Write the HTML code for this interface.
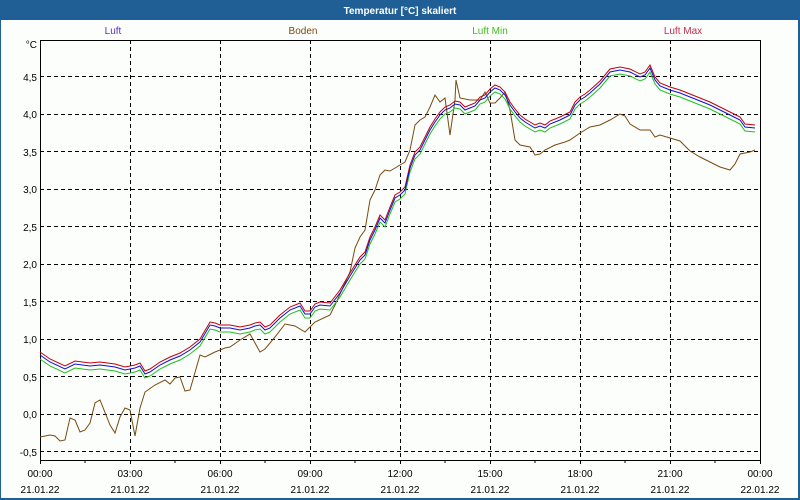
<!DOCTYPE html>
<html><head><meta charset="utf-8"><style>
html,body{margin:0;padding:0;width:800px;height:500px;overflow:hidden;background:#fcfefc}
svg{display:block}
text{font-family:"Liberation Sans",Tahoma,sans-serif;font-size:10px}
</style></head><body>
<svg width="800" height="500" xmlns="http://www.w3.org/2000/svg">
<rect x="0" y="0" width="800" height="500" fill="#1f5f96"/>
<rect x="1" y="20" width="797" height="478" fill="#fcfefc"/>
<text x="400" y="14" fill="#fff" font-weight="bold" font-size="11" text-anchor="middle">Temperatur [°C] skaliert</text>
<text x="113" y="34" fill="#6030c0" text-anchor="middle">Luft</text>
<text x="303" y="34" fill="#7a4a10" text-anchor="middle">Boden</text>
<text x="490" y="34" fill="#40c020" text-anchor="middle">Luft Min</text>
<text x="683" y="34" fill="#c03050" text-anchor="middle">Luft Max</text>
<g stroke="#000" stroke-dasharray="4,3" stroke-width="1">
<path d="M130.5 40V460M220.5 40V460M310.5 40V460M400.5 40V460M490.5 40V460M580.5 40V460M670.5 40V460"/>
<path d="M40 76.5H760M40 114.5H760M40 151.5H760M40 189.5H760M40 226.5H760M40 264.5H760M40 301.5H760M40 339.5H760M40 376.5H760M40 414.5H760M40 451.5H760"/>
</g>
<path d="M40.5 40.5H760.5V460.5H40.5Z" fill="none" stroke="#000"/>
<path d="M40.5 460V464M85 460V463M130.5 460V464M175 460V463M220.5 460V464M265 460V463M310.5 460V464M355 460V463M400.5 460V464M445 460V463M490.5 460V464M535 460V463M580.5 460V464M625 460V463M670.5 460V464M715 460V463M760.5 460V464" stroke="#000"/>
<g fill="#000" text-anchor="end">
<text x="37" y="48">°C</text>
<text x="37" y="81">4,5</text><text x="37" y="118">4,0</text><text x="37" y="156">3,5</text><text x="37" y="193">3,0</text><text x="37" y="231">2,5</text><text x="37" y="268">2,0</text><text x="37" y="306">1,5</text><text x="37" y="343">1,0</text><text x="37" y="381">0,5</text><text x="37" y="418">0,0</text><text x="37" y="456">-0,5</text>
</g>
<g fill="#000" text-anchor="middle">
<text x="40" y="477">00:00</text><text x="130" y="477">03:00</text><text x="220" y="477">06:00</text><text x="310" y="477">09:00</text><text x="400" y="477">12:00</text><text x="490" y="477">15:00</text><text x="580" y="477">18:00</text><text x="670" y="477">21:00</text><text x="760" y="477">00:00</text>
<text x="40" y="493">21.01.22</text><text x="130" y="493">21.01.22</text><text x="220" y="493">21.01.22</text><text x="310" y="493">21.01.22</text><text x="400" y="493">21.01.22</text><text x="490" y="493">21.01.22</text><text x="580" y="493">21.01.22</text><text x="670" y="493">21.01.22</text><text x="760" y="493">22.01.22</text>
</g>
<defs>
<path id="luft" d="M40 355L50 362L65 369L75 364L90 366L100 365L115 367L125 370L135 368L140 366L145 374L150 372L160 365L170 360L180 356L190 350L200 342L210 325L215 326L220 328L230 328L240 330L250 328L255 326L260 325L265 330L270 328L280 318L290 310L300 306L305 314L310 314L315 307L320 305L330 306L340 293L350 276L360 260L365 255L370 240L375 230L380 218L385 223L390 210L395 198L400 195L405 190L410 168L415 155L420 150L425 140L430 130L435 122L440 115L445 110L450 108L455 104L460 105L465 110L470 108L475 106L480 100L485 98L490 92L495 88L500 90L505 95L510 105L515 112L520 118L525 122L530 125L535 128L540 126L545 128L550 124L560 120L570 115L575 105L580 100L585 97L590 93L600 84L610 72L620 70L630 72L640 77L645 75L650 68L655 80L660 86L670 90L680 93L690 97L700 101L710 105L720 110L730 115L740 120L745 127L755 128"/>
</defs>
<g fill="none" stroke-width="1">
<path d="M40 437L50 435L55 436L60 441L65 440L70 418L75 420L80 432L85 430L90 423L95 403L100 400L110 425L115 433L120 417L125 408L130 410L135 436L140 408L145 392L155 385L165 380L170 384L175 378L180 377L185 391L190 390L200 355L205 357L215 352L225 348L230 347L240 340L250 334L260 352L265 349L275 337L285 324L295 326L305 332L315 322L330 315L335 305L345 283L350 272L355 248L360 237L365 230L370 200L375 190L380 175L385 170L390 171L395 168L400 165L405 162L410 150L415 125L420 120L425 117L430 107L435 95L440 102L445 98L450 135L455 100L456 80L460 98L470 100L480 100L485 92L490 103L495 103L500 98L505 92L510 110L515 140L520 145L530 147L535 155L540 154L545 150L555 145L565 142L570 140L580 133L590 127L600 125L610 120L620 114L625 116L630 124L640 130L650 130L655 137L660 135L670 138L680 141L690 151L700 157L710 162L720 167L730 170L735 164L740 154L750 152L755 150" stroke="#7a4a10"/>
<use href="#luft" stroke="#20c020" transform="translate(0,4)"/>
<use href="#luft" stroke="#c00010" transform="translate(0,-3)"/>
<use href="#luft" stroke="#1010d0"/>
</g>
</svg>
</body></html>
